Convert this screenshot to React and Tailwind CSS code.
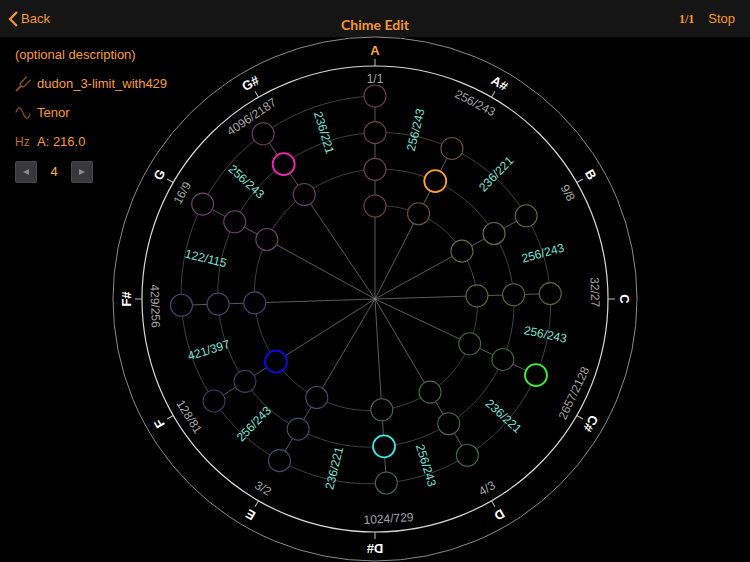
import { useState } from 'react';

const NOTES = ['A', 'A#', 'B', 'C', 'C#', 'D', 'D#', 'E', 'F', 'F#', 'G', 'G#'];

const DEGREES = [
  { ratio: '1/1', value: 1, step: '256/243', color: '#6e4247' },
  { ratio: '256/243', value: 256 / 243, step: '236/221', color: '#6b5245' },
  { ratio: '9/8', value: 9 / 8, step: '256/243', color: '#6c6b48' },
  { ratio: '32/27', value: 32 / 27, step: '256/243', color: '#66653c' },
  { ratio: '2657/2128', value: 2657 / 2128, step: '236/221', color: '#3f6644' },
  { ratio: '4/3', value: 4 / 3, step: '256/243', color: '#3f6850' },
  { ratio: '1024/729', value: 1024 / 729, step: '236/221', color: '#42685f' },
  { ratio: '3/2', value: 3 / 2, step: '256/243', color: '#434b68' },
  { ratio: '128/81', value: 128 / 81, step: '421/397', color: '#3e3a66' },
  { ratio: '429/256', value: 429 / 256, step: '122/115', color: '#4c4276' },
  { ratio: '16/9', value: 16 / 9, step: '256/243', color: '#6c4272' },
  { ratio: '4096/2187', value: 4096 / 2187, step: '236/221', color: '#68425f' },
];

// key is "degree-octave"
const ACTIVE = {
  '1-1': '#ff9f2e',
  '4-2': '#3fee33',
  '6-1': '#3ee6e0',
  '8-0': '#0a0af0',
  '11-1': '#f325b4',
};

const OCTAVES = 3;
const START = 93;
const GAP = 110 / 3;

const angleOf = (value) => Math.log2(value) * 360;
const radiusAt = (deg) => START + (GAP * deg) / 360;
const polar = (deg, r) => {
  const a = (deg * Math.PI) / 180;
  return [r * Math.sin(a), -r * Math.cos(a)];
};

const spiralPath = () => {
  const points = [];
  for (let deg = 0; deg <= OCTAVES * 360; deg += 3) {
    const [x, y] = polar(deg, radiusAt(deg));
    points.push(`${x.toFixed(2)} ${y.toFixed(2)}`);
  }
  return `M${points.join('L')}`;
};

const RadialText = ({ deg, r, rotate, children, ...rest }) => {
  const [x, y] = polar(deg, r);
  return (
    <text
      transform={`translate(${x} ${y}) rotate(${rotate})`}
      textAnchor="middle"
      dominantBaseline="central"
      {...rest}
    >
      {children}
    </text>
  );
};

const Dial = () => {
  const nodes = [];
  DEGREES.forEach((degree, i) => {
    const count = i === 0 ? OCTAVES + 1 : OCTAVES;
    for (let octave = 0; octave < count; octave++) {
      const deg = angleOf(degree.value) + octave * 360;
      const [x, y] = polar(deg, radiusAt(deg));
      nodes.push({ key: `${i}-${octave}`, x, y, color: degree.color });
    }
  });

  return (
    <svg
      viewBox="-263 -262 526 525"
      className="col-start-1 row-start-1 h-full min-h-0 w-full overflow-visible"
      role="img"
      aria-label="Scale dial"
    >
      <circle r="262" fill="none" stroke="#8a8a8a" />
      <circle r="233" fill="none" stroke="#d8d8d8" strokeWidth="1.2" />
      <path d={spiralPath()} fill="none" stroke="#423f3f" />

      {DEGREES.map((degree, i) => {
        const deg = angleOf(degree.value);
        const [x, y] = polar(deg, radiusAt(deg + (i === 0 ? OCTAVES : OCTAVES - 1) * 360));
        return <line key={degree.ratio} x2={x} y2={y} stroke="#8c8c8c" strokeOpacity="0.65" />;
      })}

      {NOTES.map((note, i) => (
        <g key={note}>
          <line y1="-240" y2="-233" stroke="#bdbdbd" transform={`rotate(${i * 30})`} />
          <RadialText
            deg={i * 30}
            r={249}
            rotate={i * 30}
            fill={i === 0 ? '#ffa62e' : '#ffffff'}
            fontSize="13"
            fontWeight="bold"
          >
            {note}
          </RadialText>
        </g>
      ))}

      {nodes.map(({ key, x, y, color }) => (
        <circle
          key={key}
          cx={x}
          cy={y}
          r="11"
          fill="#000"
          stroke={ACTIVE[key] || color}
          strokeWidth={ACTIVE[key] ? 1.8 : 1.1}
        />
      ))}

      {DEGREES.map((degree, i) => {
        const deg = angleOf(degree.value);
        const next = i === DEGREES.length - 1 ? 360 : angleOf(DEGREES[i + 1].value);
        const mid = (deg + next) / 2;
        return (
          <g key={degree.ratio} fontSize="12">
            <RadialText deg={deg} r={220} rotate={deg > 90 && deg < 270 ? deg - 180 : deg} fill="#a6a6a6">
              {degree.ratio}
            </RadialText>
            <RadialText deg={mid} r={174} rotate={mid < 180 ? mid - 90 : mid + 90} fill="#7fe0d6">
              {degree.step}
            </RadialText>
          </g>
        );
      })}
    </svg>
  );
};

const ForkIcon = () => (
  <svg viewBox="0 0 16 16" className="h-4 w-4" fill="none" stroke="#8a4d1c" strokeLinecap="round">
    <path d="M1.500 14.500L6 10" strokeWidth="1.8" />
    <path d="M11.500 1L6 6.500C4.800 7.700 4.800 8.800 6 10S8.500 11.200 9.700 10L15.500 4.200" strokeWidth="1.2" />
  </svg>
);

const WaveIcon = () => (
  <svg viewBox="0 0 16 16" className="h-4 w-4" fill="none" stroke="#8a4d1c" strokeWidth="1.2" strokeLinecap="round">
    <path d="M1 7C3 1 5.500 1.500 8 8S13 15 15 9" />
  </svg>
);

const StepButton = ({ label, onClick, children }) => (
  <button
    type="button"
    aria-label={label}
    onClick={onClick}
    className="flex h-[22px] w-[22px] items-center justify-center rounded-xs border border-[#48484c] bg-[#38383b]"
  >
    <svg viewBox="0 0 8 8" className="h-2 w-2" fill="#8b8b8d">
      {children}
    </svg>
  </button>
);

export default function App() {
  const [count, setCount] = useState(4);

  return (
    <div className="flex h-screen flex-col overflow-hidden bg-black font-['Liberation_Sans',sans-serif] text-[13px] text-[#f7962d]">
      <header className="grid h-[37px] shrink-0 grid-cols-3 items-center bg-[#151515] px-2">
        <button type="button" className="flex items-center gap-[3px] justify-self-start">
          <svg viewBox="0 0 10 16" className="h-4 w-[10px]" fill="none" stroke="currentColor" strokeWidth="2.2">
            <path d="M9 1L2 8L9 15" />
          </svg>
          Back
        </button>
        <h1 className="justify-self-center pt-3 font-['Lato',sans-serif] text-sm font-bold">Chime Edit</h1>
        <div className="flex items-center gap-[14px] justify-self-end pr-[7px]">
          <span className="font-['Liberation_Serif',serif] text-xs font-bold">1/1</span>
          <button type="button">Stop</button>
        </div>
      </header>

      <main className="grid min-h-0 flex-1 grid-cols-1 grid-rows-1">
        <Dial />
        <section className="z-10 col-start-1 row-start-1 flex flex-col gap-[9px] self-start justify-self-start pt-2 pl-[15px] leading-5 text-[#f89c33]">
          <p>(optional description)</p>
          <div className="flex items-center gap-[6px]">
            <ForkIcon />
            dudon_3-limit_with429
          </div>
          <div className="flex items-center gap-[6px]">
            <WaveIcon />
            Tenor
          </div>
          <div className="flex items-center gap-[6px]">
            <span className="w-4 text-xs text-[#c0702c]">Hz</span>
            A: 216.0
          </div>
          <div className="flex items-center">
            <StepButton label="Decrease" onClick={() => setCount(count - 1)}>
              <path d="M1 4L7 1V7Z" />
            </StepButton>
            <output className="w-[34px] text-center text-[#f5b83a]">{count}</output>
            <StepButton label="Increase" onClick={() => setCount(count + 1)}>
              <path d="M7 4L1 1V7Z" />
            </StepButton>
          </div>
        </section>
      </main>
    </div>
  );
}
